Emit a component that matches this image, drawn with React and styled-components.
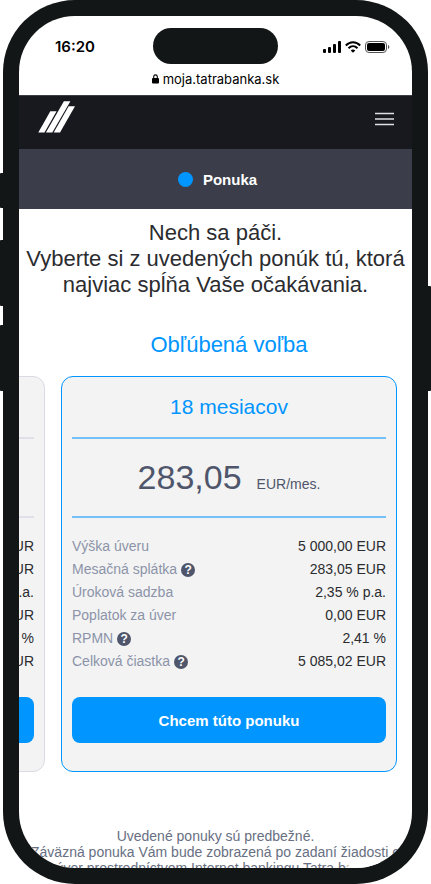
import React from "react";
import styled, { createGlobalStyle } from "styled-components";

const GlobalStyle = createGlobalStyle`
  *, *::before, *::after { box-sizing: border-box; }
  body {
    margin: 0;
    background: #ffffff;
    font-family: "Liberation Sans", Arial, Helvetica, sans-serif;
  }
  h1, h2, h3, p, dl, dt, dd { margin: 0; font-weight: 400; }
`;

const color = {
  shell: "#121616",
  navy: "#18191f",
  slate: "#3b3e4a",
  blue: "#0095ff",
  rule: "#74c1fa",
  card: "#f3f3f3",
  ink: "#2b2c2f",
  grey: "#4f566b",
  muted: "#8c93a9",
};

const Device = styled.div`
  position: relative;
  height: 100vh;
  padding: 0 3px;
`;

const Shell = styled.div`
  height: 100%;
  padding: 16px;
  border-radius: 72px;
  background: ${color.shell};
`;

const SideKey = styled.span`
  position: absolute;
  ${(p) => p.$side}: 0;
  top: ${(p) => p.$top}px;
  width: 6px;
  height: ${(p) => p.$length}px;
  border-radius: 1px;
  background: ${color.shell};
`;

const Screen = styled.div`
  position: relative;
  height: 100%;
  overflow: hidden;
  border-radius: 56px;
  background: #ffffff;
`;

const StatusBar = styled.div`
  display: grid;
  grid-template-columns: 1fr 125px 1fr;
  align-items: center;
  padding-top: 12px;
  font-family: Inter, sans-serif;
`;

const Clock = styled.time`
  padding: 2px 0 0 36px;
  font-size: 15px;
  line-height: 18px;
  font-weight: 600;
  color: #000000;
`;

const Island = styled.span`
  height: 36px;
  border-radius: 18px;
  background: ${color.shell};
`;

const Indicators = styled.div`
  display: flex;
  align-items: center;
  justify-content: flex-end;
  gap: 4px;
  padding: 2px 22px 0 0;
`;

const AddressBar = styled.div`
  display: flex;
  align-items: center;
  justify-content: center;
  gap: 4px;
  height: 31px;
  padding-bottom: 2px;
  font-family: Inter, sans-serif;
  font-size: 13px;
  color: #000000;
`;

const Header = styled.header`
  display: flex;
  align-items: flex-start;
  justify-content: space-between;
  height: 54px;
  padding: 5px 18px 0 19px;
  border-top: 1px solid #3b3e44;
  background: ${color.navy};
`;

const LogoLink = styled.a`
  display: flex;
`;

const MenuButton = styled.button`
  display: flex;
  margin-top: 11px;
  padding: 0;
  border: 0;
  background: none;
`;

const StepBar = styled.div`
  display: flex;
  align-items: center;
  justify-content: center;
  gap: 10px;
  height: 60px;
  padding-left: 4px;
  background: ${color.slate};
  color: #ffffff;
  font-size: 15px;
  font-weight: 700;
`;

const StepDot = styled.span`
  width: 15px;
  height: 15px;
  border-radius: 50%;
  background: ${color.blue};
`;

const Intro = styled.h1`
  padding-top: 11px;
  text-align: center;
  font-size: 22px;
  line-height: 26px;
  color: ${color.ink};
  white-space: nowrap;
`;

const Popular = styled.h2`
  padding: 33px 15px 17px 42px;
  text-align: center;
  font-size: 22px;
  line-height: 28px;
  color: ${color.blue};
`;

const Carousel = styled.div`
  display: flex;
  justify-content: flex-end;
  gap: 16px;
  padding-right: 15px;
  overflow: hidden;
`;

const Card = styled.article`
  flex: 0 0 calc(100% - 42px);
  padding: 0 10px 28px;
  border: 1px solid ${(p) => (p.$active ? color.blue : "#d9dae3")};
  border-radius: 12px;
  background: ${color.card};
`;

const CardTitle = styled.h3`
  height: 62px;
  border-bottom: 2px solid ${(p) => (p.$active ? color.rule : "#dfe0e8")};
  text-align: center;
  font-size: 21px;
  line-height: 60px;
  color: ${color.blue};
`;

const Price = styled.p`
  display: flex;
  align-items: baseline;
  justify-content: center;
  gap: 15px;
  height: 79px;
  border-bottom: 2px solid ${(p) => (p.$active ? color.rule : "#dfe0e8")};
  color: ${color.grey};
  line-height: 77px;
`;

const Amount = styled.span`
  font-size: 34px;
`;

const Unit = styled.span`
  font-size: 14px;
`;

const Details = styled.dl`
  padding: 17px 0 24px;
`;

const Detail = styled.div`
  display: flex;
  justify-content: space-between;
  font-size: 14px;
  line-height: 23px;
`;

const Label = styled.dt`
  display: flex;
  align-items: center;
  gap: 4px;
  color: ${color.muted};
`;

const Value = styled.dd`
  color: ${color.ink};
`;

const HelpButton = styled.button`
  display: flex;
  align-items: center;
  justify-content: center;
  width: 14px;
  height: 14px;
  padding: 0;
  border: 0;
  border-radius: 50%;
  background: ${color.grey};
  color: #ffffff;
  font-family: inherit;
  font-size: 12px;
  font-weight: 700;
  line-height: 14px;
`;

const ChooseButton = styled.button`
  width: 100%;
  height: 46px;
  padding: 0;
  border: 0;
  border-radius: 8px;
  background: ${color.blue};
  color: #ffffff;
  font-family: inherit;
  font-size: 15px;
  font-weight: 700;
`;

const Note = styled.p`
  display: flex;
  flex-direction: column;
  align-items: center;
  padding-top: 56px;
  font-size: 14px;
  line-height: 16px;
  color: #686f82;
  white-space: nowrap;
`;

const FloatingDisc = styled.span`
  position: absolute;
  right: 18px;
  bottom: -44px;
  width: 54px;
  height: 54px;
  border-radius: 50%;
  background: #ffffff;
  box-shadow: 0 0 8px rgba(0, 0, 0, 0.06);
`;

const SignalIcon = () => (
  <svg width="18" height="12" viewBox="0 0 18 12" aria-hidden="true">
    <rect x="0" y="8" width="3" height="4" rx="1" />
    <rect x="5" y="6" width="3" height="6" rx="1" />
    <rect x="10" y="3" width="3" height="9" rx="1" />
    <rect x="15" y="0" width="3" height="12" rx="1" />
  </svg>
);

const WifiIcon = () => (
  <svg width="16" height="12" viewBox="0 0 16 12" aria-hidden="true">
    <g fill="none" stroke="#000" strokeWidth="2">
      <path d="M.8 4.5C5 .2 11 .2 15.200 4.500" />
      <path d="M3.500 7.300c2.600-2.600 6.400-2.600 9 0" />
    </g>
    <path d="M5.700 9.400c1.300-1.200 3.300-1.200 4.600 0L8 11.800Z" />
  </svg>
);

const BatteryIcon = () => (
  <svg width="25" height="12" viewBox="0 0 25 12" aria-hidden="true">
    <rect x=".5" y=".5" width="21" height="11" rx="3.500" fill="none" stroke="#555" />
    <rect x="2" y="2" width="18" height="8" rx="2" />
    <path d="M23 4c1.800.6 1.800 3.400 0 4Z" fill="#555" />
  </svg>
);

const LockIcon = () => (
  <svg width="7" height="10" viewBox="0 0 7 10" aria-hidden="true">
    <path d="M1.700 4.500V2.700a1.800 1.800 0 0 1 3.600 0v1.800" fill="none" stroke="#000" strokeWidth="1.100" />
    <rect x="0" y="4" width="7" height="5.500" rx="1" />
  </svg>
);

const Logo = () => (
  <svg width="38" height="32" viewBox="0 0 38 32" fill="#fff" aria-hidden="true">
    <path d="M.3 31.400 12.300 10.300H18.600L6.500 31.400Z" />
    <path d="M7.900 31.400 25.900 .3H32.400L14.300 31.400Z" />
    <path d="M15.700 31.400 30.700 5.200H37L22 31.400Z" />
  </svg>
);

const MenuIcon = () => (
  <svg width="19" height="14" viewBox="0 0 19 14" stroke="#dedfe3" strokeWidth="1.300" aria-hidden="true">
    <path d="M0 1.500H19M0 7H19M0 12.500H19" />
  </svg>
);

const offers = [
  {
    title: "12 mesiacov",
    amount: "421,95",
    active: false,
    values: ["5 000,00 EUR", "421,95 EUR", "2,35 % p.a.", "0,00 EUR", "2,39 %", "5 063,40 EUR"],
  },
  {
    title: "18 mesiacov",
    amount: "283,05",
    active: true,
    values: ["5 000,00 EUR", "283,05 EUR", "2,35 % p.a.", "0,00 EUR", "2,41 %", "5 085,02 EUR"],
  },
];

const labels = [
  { text: "Výška úveru" },
  { text: "Mesačná splátka", help: true },
  { text: "Úroková sadzba" },
  { text: "Poplatok za úver" },
  { text: "RPMN", help: true },
  { text: "Celková čiastka", help: true },
];

function Offer({ title, amount, active, values }) {
  return (
    <Card $active={active}>
      <CardTitle $active={active}>{title}</CardTitle>
      <Price $active={active}>
        <Amount>{amount}</Amount>
        <Unit>EUR/mes.</Unit>
      </Price>
      <Details>
        {labels.map((label, i) => (
          <Detail key={label.text}>
            <Label>
              {label.text}
              {label.help && (
                <HelpButton type="button" aria-label={label.text}>
                  ?
                </HelpButton>
              )}
            </Label>
            <Value>{values[i]}</Value>
          </Detail>
        ))}
      </Details>
      <ChooseButton type="button">Chcem túto ponuku</ChooseButton>
    </Card>
  );
}

export default function App() {
  return (
    <>
      <GlobalStyle />
      <Device>
        <SideKey $side="left" $top={173} $length={35} />
        <SideKey $side="left" $top={240} $length={66} />
        <SideKey $side="left" $top={325} $length={66} />
        <SideKey $side="right" $top={286} $length={105} />
        <Shell>
          <Screen>
            <StatusBar>
              <Clock>16:20</Clock>
              <Island />
              <Indicators>
                <SignalIcon />
                <WifiIcon />
                <BatteryIcon />
              </Indicators>
            </StatusBar>
            <AddressBar>
              <LockIcon />
              moja.tatrabanka.sk
            </AddressBar>
            <Header>
              <LogoLink href="#" aria-label="Tatra banka">
                <Logo />
              </LogoLink>
              <MenuButton type="button" aria-label="Menu">
                <MenuIcon />
              </MenuButton>
            </Header>
            <StepBar>
              <StepDot />
              Ponuka
            </StepBar>
            <main>
              <Intro>
                Nech sa páči.
                <br />
                Vyberte si z uvedených ponúk tú, ktorá
                <br />
                najviac spĺňa Vaše očakávania.
              </Intro>
              <Popular>Obľúbená voľba</Popular>
              <Carousel>
                {offers.map((offer) => (
                  <Offer key={offer.title} {...offer} />
                ))}
              </Carousel>
              <Note>
                <span>Uvedené ponuky sú predbežné.</span>
                <span>Záväzná ponuka Vám bude zobrazená po zadaní žiadosti o</span>
                <span>úver prostredníctvom Internet bankingu Tatra banky</span>
              </Note>
            </main>
            <FloatingDisc />
          </Screen>
        </Shell>
      </Device>
    </>
  );
}
